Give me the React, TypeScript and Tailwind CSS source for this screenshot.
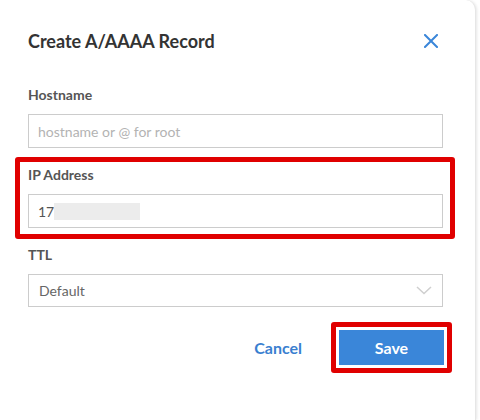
import React from "react";

export default function App() {
  return (
    <div className="w-[480px] h-[420px] bg-white overflow-hidden" style={{ fontFamily: "Lato, 'Open Sans', sans-serif" }}>
      <div className="w-[476px] h-[420px] bg-white rounded-tr-[10px] border-r border-[#e6e6e6] shadow-[1px_0_3px_rgba(0,0,0,0.10)] pl-[28px] pr-[32px] pt-[27px]">
        <div className="flex items-center justify-between h-[28px]">
          <h1 className="text-[18px] font-bold text-[#333] leading-[28px]">Create A/AAAA Record</h1>
          <svg width="14" height="14" viewBox="0 0 14 14" className="mr-[5px]">
            <path d="M1 1 L13 13 M13 1 L1 13" stroke="#3a86d9" strokeWidth="2" strokeLinecap="square" />
          </svg>
        </div>

        <div className="mt-[31px] text-[14px] font-bold text-[#555] leading-[18px]">Hostname</div>
        <div className="mt-[10px] h-[34px] border border-[#cccccc] flex items-center pl-[9px] text-[14px] text-[#b3b3b3]">
          hostname or @ for root
        </div>

        <div className="mt-[9px] -ml-[13px] -mr-[12px] border-[5px] border-[#e00000] rounded-[3px] pl-[8px] pr-[7px] pt-[4px] pb-[6px]">
          <div className="text-[14px] font-bold text-[#555] leading-[18px]">IP Address</div>
          <div className="mt-[10px] h-[34px] border border-[#cccccc] flex items-center pl-[9px] text-[14px] text-[#555]">
            <span>17</span>
            <span className="inline-block w-[86px] h-[17px] bg-[#ececec]"></span>
          </div>
        </div>

        <div className="mt-[7px] text-[14px] font-bold text-[#555] leading-[18px]">TTL</div>
        <div className="mt-[10px] h-[33px] border border-[#cccccc] flex items-center justify-between pl-[10px] pr-[10px] text-[14px] text-[#666]">
          <span className="leading-[18px]">Default</span>
          <svg width="16" height="9" viewBox="0 0 16 9">
            <path d="M1 1 L8 7.5 L15 1" stroke="#cfcfcf" strokeWidth="1.5" fill="none" />
          </svg>
        </div>

        <div className="mt-[15px] flex items-center justify-end -mr-[9px]">
          <span className="text-[16px] font-bold text-[#3a7fd0] mr-[29px]">Cancel</span>
          <div className="border-[5px] border-[#e00000] rounded-[3px] p-[3px] bg-white">
            <div className="w-[105px] h-[35px] bg-[#3a86d9] flex items-center justify-center text-[16px] font-bold text-white">
              Save
            </div>
          </div>
        </div>
      </div>
    </div>
  );
}
